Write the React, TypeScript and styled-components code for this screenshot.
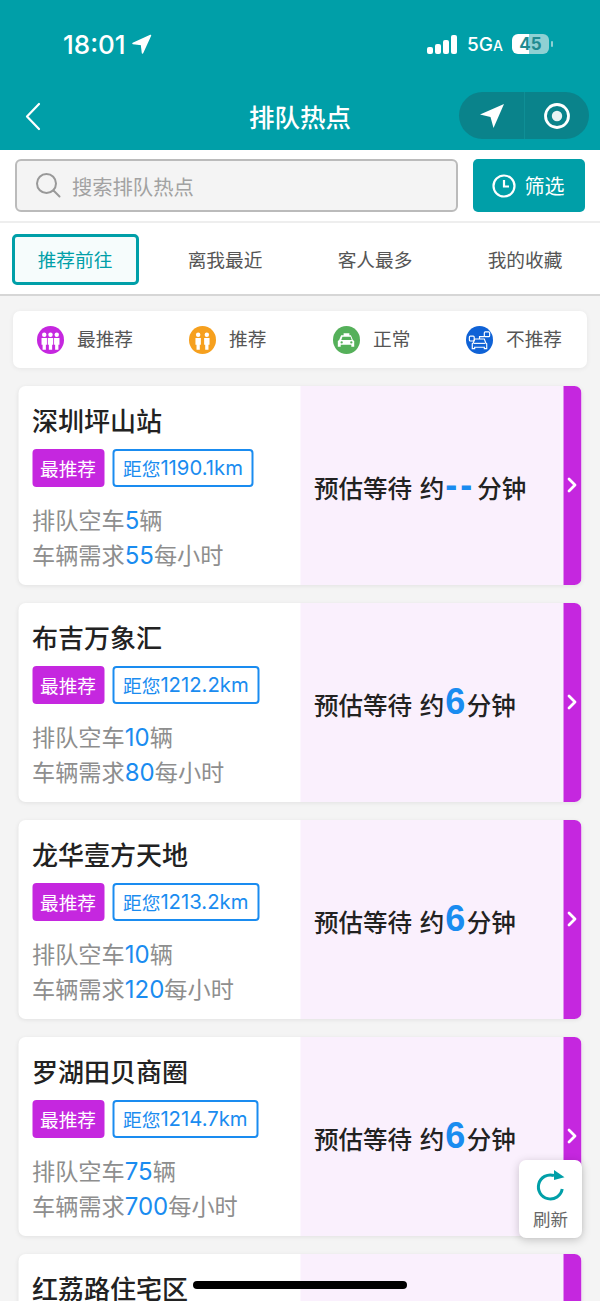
import React from 'react';
import styled, { createGlobalStyle } from 'styled-components';

const PURPLE = '#c527df';
const TEAL = '#009fa8';
const BLUE = '#1a8cf0';

const GlobalStyle = createGlobalStyle`
  html, body {
    margin: 0;
    padding: 0;
    background: #f4f4f4;
  }
  * {
    box-sizing: border-box;
  }
`;

interface Spot {
  name: string;
  distance: string;
  cars: string;
  demand: string;
  wait: string;
}

const spots: Spot[] = [
  { name: '深圳坪山站', distance: '1190.1', cars: '5', demand: '55', wait: '--' },
  { name: '布吉万象汇', distance: '1212.2', cars: '10', demand: '80', wait: '6' },
  { name: '龙华壹方天地', distance: '1213.2', cars: '10', demand: '120', wait: '6' },
  { name: '罗湖田贝商圈', distance: '1214.7', cars: '75', demand: '700', wait: '6' },
  { name: '红荔路住宅区', distance: '1216.0', cars: '20', demand: '90', wait: '6' },
];

const tabs = ['推荐前往', '离我最近', '客人最多', '我的收藏'];

const People = ({ count }: { count: number }) => {
  const xs = count === 3 ? [7.5, 14, 20.5] : [9.5, 18.5];
  return (
    <svg width="27" height="28" viewBox="0 0 28 28" fill="#fff">
      {xs.map((x) => (
        <g key={x}>
          <circle cx={x} cy="8.5" r="2.3" />
          <path d={`M${x - 2.8} 12h5.6v7h-1.1v5h-3.4v-5h-1.1z`} />
        </g>
      ))}
    </svg>
  );
};

const Taxi = () => (
  <svg width="27" height="28" viewBox="0 0 28 28" fill="#fff">
    <path d="M11 7h6v2h1.6l2 5 1.4 1v6h-3v-2H8v2H5v-6l1.400-1 2-5H11zM9.800 10.500 8.600 14h10.800l-1.200-3.500z" fillRule="evenodd" />
    <circle cx="9" cy="16.500" r="1.200" fill="#55b05a" />
    <circle cx="19" cy="16.500" r="1.200" fill="#55b05a" />
  </svg>
);

const Cars = () => (
  <svg width="27" height="28" viewBox="0 0 28 28" fill="none" stroke="#fff" strokeWidth="1.200">
    <path d="M9 13h10l1.500 4 1 1v5h-2.500v-1.500H9V23H6.500v-5l1-1z" />
    <path d="M8 17.500h12" />
    <rect x="3.500" y="10" width="5" height="5" rx="1" />
    <rect x="19" y="5.500" width="5.500" height="5" rx="1" />
    <path d="M14 13v-2.500h5" />
  </svg>
);

const App: React.FC = () => (
  <Page>
    <GlobalStyle />
    <Header>
      <StatusBar>
        <Clock>
          18:01
          <svg width="21" height="21" viewBox="0 0 21 21" fill="#fff" stroke="#fff" strokeWidth="1.500" strokeLinejoin="round">
            <path d="M19.500 1.500 2 9.500l8.500 1 1 8.500z" />
          </svg>
        </Clock>
        <StatusRight>
          <svg width="31" height="19" viewBox="0 0 31 19" fill="#fff">
            <rect x="0" y="12" width="6" height="7" rx="2" />
            <rect x="8" y="9" width="6" height="10" rx="2" />
            <rect x="16" y="5" width="6" height="14" rx="2" />
            <rect x="24" y="0" width="6" height="19" rx="2" />
          </svg>
          <Network>
            5G<small>A</small>
          </Network>
          <Battery>
            <BatteryText>45</BatteryText>
          </Battery>
        </StatusRight>
      </StatusBar>
      <NavBar>
        <BackSlot>
          <svg width="16" height="29" viewBox="0 0 16 29" fill="none" stroke="#fff" strokeWidth="2.200" strokeLinecap="round" strokeLinejoin="round">
            <path d="M14 2 2 14.500 14 27" />
          </svg>
        </BackSlot>
        <Title>排队热点</Title>
        <Capsule>
          <CapsuleCell>
            <svg width="26" height="26" viewBox="0 0 26 26" fill="#fff">
              <path d="M25 1 1 11.500l10.500 2.500 3 11z" />
            </svg>
          </CapsuleCell>
          <CapsuleCell>
            <svg width="28" height="28" viewBox="0 0 28 28">
              <circle cx="14" cy="14" r="11.500" fill="none" stroke="#fff" strokeWidth="2.800" />
              <circle cx="14" cy="14" r="5.200" fill="#fff" opacity="0.9" />
            </svg>
          </CapsuleCell>
        </Capsule>
      </NavBar>
    </Header>

    <SearchRow>
      <SearchBox>
        <svg width="27" height="27" viewBox="0 0 27 27" fill="none" stroke="#999" strokeWidth="2" strokeLinecap="round">
          <circle cx="11.500" cy="11.500" r="9.500" />
          <path d="m18.500 18.500 6 6" />
        </svg>
        <Placeholder>搜索排队热点</Placeholder>
      </SearchBox>
      <FilterButton>
        <svg width="24" height="24" viewBox="0 0 24 24" fill="none" stroke="#fff" strokeWidth="2.200">
          <circle cx="12" cy="12" r="10.500" />
          <path d="M12 6v6.500h5" />
        </svg>
        筛选
      </FilterButton>
    </SearchRow>

    <Tabs>
      {tabs.map((tab, i) => (
        <TabCell key={tab}>
          <Tab $active={i === 0}>{tab}</Tab>
        </TabCell>
      ))}
    </Tabs>

    <Content>
      <Legend>
        <LegendItem>
          <LegendDot $color={PURPLE}><People count={3} /></LegendDot>
          最推荐
        </LegendItem>
        <LegendItem>
          <LegendDot $color="#f6a01e"><People count={2} /></LegendDot>
          推荐
        </LegendItem>
        <LegendItem>
          <LegendDot $color="#55b05a"><Taxi /></LegendDot>
          正常
        </LegendItem>
        <LegendItem>
          <LegendDot $color="#0f62d6"><Cars /></LegendDot>
          不推荐
        </LegendItem>
      </Legend>

      {spots.map((spot) => (
        <Card key={spot.name}>
          <CardInfo>
            <SpotName>{spot.name}</SpotName>
            <TagRow>
              <LevelTag>最推荐</LevelTag>
              <DistanceTag>距您<TagNum>{spot.distance}km</TagNum></DistanceTag>
            </TagRow>
            <Stats>
              <div>排队空车<Num>{spot.cars}</Num>辆</div>
              <div>车辆需求<Num>{spot.demand}</Num>每小时</div>
            </Stats>
          </CardInfo>
          <CardWait>
            预估等待 约<WaitNum $dash={spot.wait === '--'}>{spot.wait}</WaitNum>分钟
          </CardWait>
          <CardStrip>
            <svg width="11" height="16" viewBox="0 0 11 16" fill="none" stroke="#fff" strokeWidth="2.800" strokeLinecap="round" strokeLinejoin="round">
              <path d="m2.500 2 6 6-6 6" />
            </svg>
          </CardStrip>
        </Card>
      ))}
    </Content>

    <RefreshButton>
      <svg width="32" height="34" viewBox="0 0 32 34" fill="none">
        <path d="M19 6.500A12 12 0 1 0 27.200 20" stroke={TEAL} strokeWidth="3" />
        <path d="M19 1 29.500 8.300 19 11z" fill={TEAL} />
      </svg>
      刷新
    </RefreshButton>
    <HomeIndicator />
  </Page>
);

const Page = styled.div`
  position: relative;
  width: 600px;
  height: 1301px;
  overflow: hidden;
  background: #f4f4f4;
  font-family: "Liberation Sans", "Noto Sans CJK SC", sans-serif;
`;

const Header = styled.header`
  height: 150px;
  background: ${TEAL};
  color: #fff;
`;

const StatusBar = styled.div`
  height: 92px;
  padding: 27px 51px 0 63px;
  display: flex;
  justify-content: space-between;
  align-items: flex-start;
  font-family: Inter, sans-serif;
`;

const Clock = styled.div`
  display: flex;
  align-items: center;
  gap: 5px;
  height: 34px;
  font-size: 26px;
  font-weight: 500;
`;

const StatusRight = styled.div`
  display: flex;
  align-items: center;
  height: 34px;
  gap: 9px;
`;

const Network = styled.span`
  width: 36px;
  font-size: 19px;
  font-weight: 500;
  white-space: nowrap;
  small {
    font-size: 14px;
  }
`;

const Battery = styled.div`
  position: relative;
  width: 37px;
  height: 20px;
  border-radius: 6px;
  background: linear-gradient(90deg, #fff 0 46%, #8fd0d3 46% 100%);
  &::after {
    content: '';
    position: absolute;
    right: -4px;
    top: 7px;
    width: 2px;
    height: 6px;
    border-radius: 1px;
    background: #8fd0d3;
  }
`;

const BatteryText = styled.span`
  display: block;
  text-align: center;
  font-size: 17px;
  font-weight: 700;
  line-height: 20px;
  color: #1f8a90;
`;

const NavBar = styled.div`
  height: 47px;
  padding: 0 11px;
  display: grid;
  grid-template-columns: 1fr auto 1fr;
  align-items: center;
`;

const BackSlot = styled.div`
  display: flex;
  align-items: center;
  padding: 1px 0 0 14px;
`;

const Title = styled.div`
  font-size: 25.500px;
  font-weight: 500;
  padding-bottom: 1px;
`;

const Capsule = styled.div`
  justify-self: end;
  width: 130px;
  height: 47px;
  border-radius: 24px;
  background: #0a838b;
  display: grid;
  grid-template-columns: 1fr 1fr;
`;

const CapsuleCell = styled.div`
  display: flex;
  align-items: center;
  justify-content: center;
  & + & {
    border-left: 1px solid #0f8f96;
  }
`;

const SearchRow = styled.div`
  height: 73px;
  padding: 9px 15px 0;
  display: flex;
  justify-content: space-between;
  align-items: flex-start;
  background: #fff;
  border-bottom: 2px solid #eee;
`;

const SearchBox = styled.div`
  width: 443px;
  height: 53px;
  padding: 0 18px;
  display: flex;
  align-items: center;
  gap: 10px;
  border: 2px solid #bbb;
  border-radius: 6px;
  background: #f4f4f4;
`;

const Placeholder = styled.span`
  font-size: 20.300px;
  color: #a2a2a2;
`;

const FilterButton = styled.div`
  width: 112px;
  height: 53px;
  padding-right: 2px;
  border-radius: 5px;
  background: ${TEAL};
  color: #fff;
  font-size: 20px;
  display: flex;
  align-items: center;
  justify-content: center;
  gap: 9px;
`;

const Tabs = styled.nav`
  height: 73px;
  background: #fff;
  border-bottom: 2px solid #d6d6d6;
  display: grid;
  grid-template-columns: repeat(4, 150px);
`;

const TabCell = styled.div`
  display: flex;
  justify-content: center;
  padding-top: 11px;
`;

const Tab = styled.div<{ $active: boolean }>`
  width: 127px;
  height: 51px;
  padding-bottom: 3px;
  display: flex;
  align-items: center;
  justify-content: center;
  font-size: 18.700px;
  border-radius: 5px;
  color: ${(p) => (p.$active ? TEAL : '#555')};
  border: ${(p) => (p.$active ? `3px solid ${TEAL}` : '3px solid transparent')};
  background: ${(p) => (p.$active ? '#f6fcfc' : 'transparent')};
`;

const Content = styled.main`
  display: flex;
  flex-direction: column;
  align-items: center;
  padding-top: 15px;
`;

const Legend = styled.section`
  width: 574px;
  height: 57px;
  margin-bottom: 18px;
  padding: 0 0 0 24px;
  display: grid;
  grid-template-columns: 152px 144px 133px auto;
  align-items: center;
  background: #fff;
  border-radius: 7px;
  box-shadow: 0 1px 5px rgba(0, 0, 0, 0.06);
`;

const LegendItem = styled.div`
  display: flex;
  align-items: center;
  gap: 13px;
  font-size: 18.700px;
  line-height: 24px;
  color: #555;
`;

const LegendDot = styled.span<{ $color: string }>`
  width: 27px;
  height: 28px;
  border-radius: 50%;
  background: ${(p) => p.$color};
  display: flex;
`;

const Card = styled.article`
  flex: none;
  width: 563px;
  height: 199px;
  margin-bottom: 18px;
  transform: translateX(-0.500px);
  display: grid;
  grid-template-columns: 282px 263px 18px;
  border-radius: 7px;
  overflow: hidden;
  background: #fff;
  box-shadow: 0 1px 4px rgba(0, 0, 0, 0.08);
`;

const CardInfo = styled.div`
  padding: 17px 0 0 14px;
`;

const SpotName = styled.div`
  font-size: 26px;
  font-weight: 500;
  line-height: 38px;
  color: #222;
`;

const TagRow = styled.div`
  margin-top: 8px;
  display: flex;
  gap: 8px;
`;

const LevelTag = styled.span`
  width: 72px;
  height: 38px;
  padding-bottom: 2px;
  border-radius: 4px;
  background: ${PURPLE};
  color: #fff;
  font-size: 18.700px;
  display: flex;
  align-items: center;
  justify-content: center;
`;

const DistanceTag = styled.span`
  height: 38px;
  padding: 0 9px 2px;
  border: 2px solid ${BLUE};
  border-radius: 4px;
  color: ${BLUE};
  font-size: 18.700px;
  display: flex;
  align-items: center;
`;

const TagNum = styled.span`
  font-family: Inter, sans-serif;
  font-size: 20.300px;
`;

const Stats = styled.div`
  margin-top: 17px;
  font-size: 23.200px;
  line-height: 35px;
  color: #8e8e8e;
`;

const Num = styled.span`
  color: ${BLUE};
  font-family: Inter, sans-serif;
  font-size: 24px;
  line-height: 1;
`;

const CardWait = styled.div`
  padding: 4px 0 0 14px;
  display: flex;
  align-items: center;
  background: #faf0fd;
  font-size: 24.500px;
  font-weight: 500;
  word-spacing: 1px;
  color: #222;
  white-space: pre;
`;

const WaitNum = styled.span<{ $dash: boolean }>`
  color: ${BLUE};
  font-size: 36px;
  font-weight: 700;
  line-height: 1;
  letter-spacing: ${(p) => (p.$dash ? '3px' : '1.500px')};
  margin: 0 ${(p) => (p.$dash ? '2px' : '0')} 0 1px;
  transform: translateY(-3px);
`;

const CardStrip = styled.div`
  background: ${PURPLE};
  display: flex;
  align-items: center;
  justify-content: center;
  padding-bottom: 2px;
`;

const RefreshButton = styled.div`
  position: absolute;
  left: 519px;
  top: 1160px;
  width: 63px;
  height: 78px;
  padding-top: 9px;
  display: flex;
  flex-direction: column;
  align-items: center;
  gap: 5px;
  background: #fff;
  border-radius: 7px;
  box-shadow: 0 2px 10px rgba(0, 0, 0, 0.2);
  font-size: 17.500px;
  line-height: 24px;
  color: #666;
`;

const HomeIndicator = styled.div`
  position: absolute;
  left: 193px;
  top: 1281px;
  width: 214px;
  height: 8px;
  border-radius: 4px;
  background: #000;
`;

export default App;
